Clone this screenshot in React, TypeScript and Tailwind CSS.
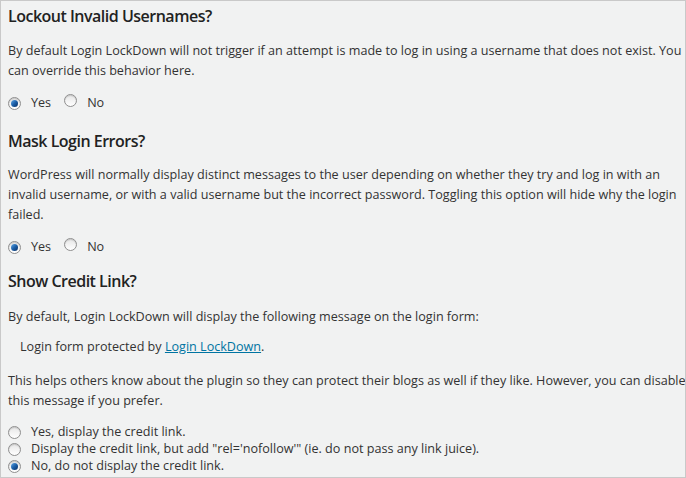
import React from 'react';

function Radio({ checked }: { checked?: boolean }) {
  return (
    <span className="relative inline-block h-[13px] w-[13px] shrink-0 rounded-full border border-[#8f8f8f] bg-gradient-to-b from-[#e6e6e6] to-[#ffffff] shadow-[inset_0_1px_1px_rgba(0,0,0,0.15)]">
      {checked && (
        <span className="absolute left-[2px] top-[2px] h-[7px] w-[7px] rounded-full bg-gradient-to-br from-[#5fa8e6] via-[#1b5fa8] to-[#0b2f63]" />
      )}
    </span>
  );
}

function YesNo() {
  return (
    <div className="flex h-[20px] items-center">
      <Radio checked />
      <span className="ml-[10px]">Yes</span>
      <span className="ml-[13px]"><Radio /></span>
      <span className="ml-[10px]">No</span>
    </div>
  );
}

export default function App() {
  return (
    <div
      className="h-[478px] w-[686px] overflow-hidden border border-[#c9c9c9] bg-[#f1f2f2] pl-[7px] pt-[3px] text-[12.6px] text-[#333] whitespace-nowrap"
      style={{ fontFamily: '"Open Sans", "Noto Sans", sans-serif' }}
    >
      <h3 className="h-[24px] text-[16px] font-semibold leading-[24px] tracking-[-0.5px] text-[#222]">Lockout Invalid Usernames?</h3>
      <p className="mt-[13px] leading-[20px]">
        By default Login LockDown will not trigger if an attempt is made to log in using a username that does not exist. You
        <br />
        can override this behavior here.
      </p>
      <div className="mt-[12px]">
        <YesNo />
      </div>

      <h3 className="mt-[16px] h-[24px] text-[16px] font-semibold leading-[24px] tracking-[-0.5px] text-[#222]">Mask Login Errors?</h3>
      <p className="mt-[12px] leading-[20px]">
        WordPress will normally display distinct messages to the user depending on whether they try and log in with an
        <br />
        invalid username, or with a valid username but the incorrect password. Toggling this option will hide why the login
        <br />
        failed.
      </p>
      <div className="mt-[12px]">
        <YesNo />
      </div>

      <h3 className="mt-[12px] h-[24px] text-[16px] font-semibold leading-[24px] tracking-[-0.5px] text-[#222]">Show Credit Link?</h3>
      <p className="mt-[14px] leading-[20px]">
        By default, Login LockDown will display the following message on the login form:
      </p>
      <p className="mt-[10px] pl-[12px] leading-[20px]">
        Login form protected by{' '}
        <a href="#" className="text-[#0074a2] underline">Login LockDown</a>.
      </p>
      <p className="mt-[14px] leading-[20px]">
        This helps others know about the plugin so they can protect their blogs as well if they like. However, you can disable
        <br />
        this message if you prefer.
      </p>
      <div className="mt-[13px] flex flex-col">
        <label className="flex h-[17px] items-center">
          <Radio />
          <span className="ml-[10px]">Yes, display the credit link.</span>
        </label>
        <label className="flex h-[17px] items-center">
          <Radio />
          <span className="ml-[10px]">Display the credit link, but add "rel='nofollow'" (ie. do not pass any link juice).</span>
        </label>
        <label className="flex h-[17px] items-center">
          <Radio checked />
          <span className="ml-[10px]">No, do not display the credit link.</span>
        </label>
      </div>
    </div>
  );
}
